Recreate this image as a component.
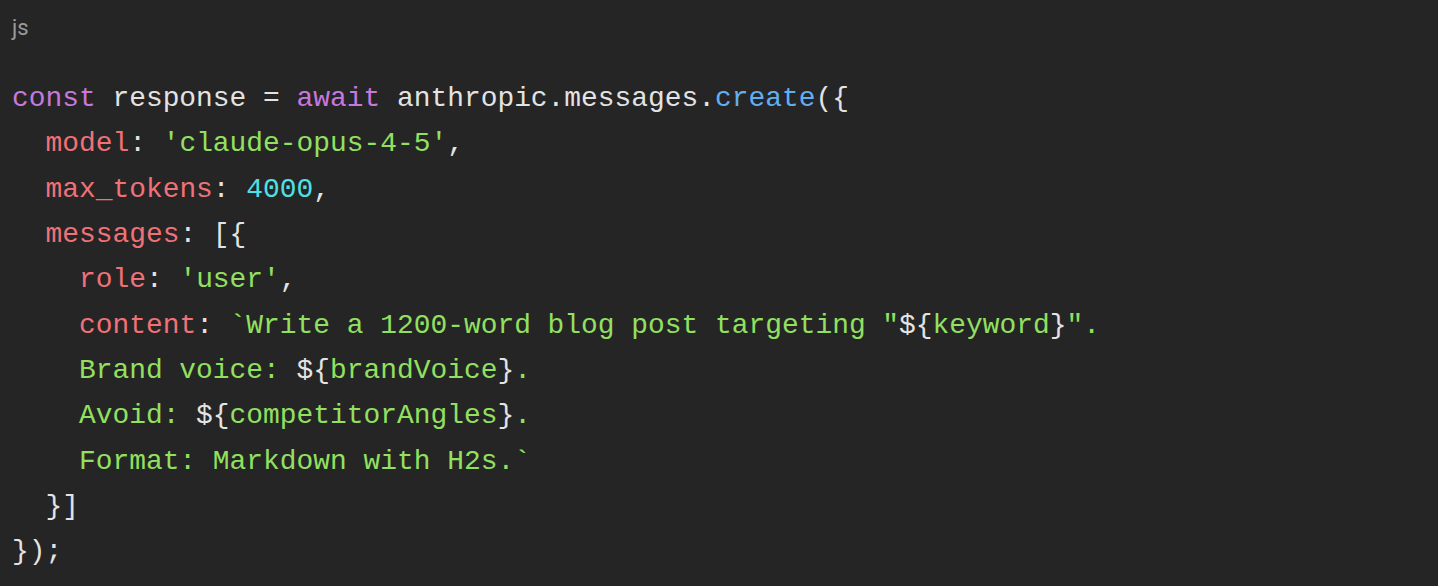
import React from "react";

const P = ({ children }: { children: React.ReactNode }) => <span className="text-[#c678dd]">{children}</span>;
const R = ({ children }: { children: React.ReactNode }) => <span className="text-[#f07178]">{children}</span>;
const G = ({ children }: { children: React.ReactNode }) => <span className="text-[#92e060]">{children}</span>;
const B = ({ children }: { children: React.ReactNode }) => <span className="text-[#61aff0]">{children}</span>;
const C = ({ children }: { children: React.ReactNode }) => <span className="text-[#4fe0e6]">{children}</span>;

export default function App() {
  return (
    <div className="w-[1438px] h-[586px] bg-[#252525] overflow-hidden pl-[12px] pt-[13px]">
      <div className="text-[22px] leading-[30px] text-[#9a9a9a]" style={{ fontFamily: "Roboto, 'Noto Sans', sans-serif" }}>
        js
      </div>
      <pre
        className="mt-[33px] text-[27.9px] leading-[45.35px] text-[#e3e3e3] whitespace-pre"
        style={{ fontFamily: "'Liberation Mono', 'DejaVu Sans Mono', monospace" }}
      >
        <div><P>const</P> response = <P>await</P> anthropic.messages.<B>create</B>{"({"}</div>
        <div>  <R>model</R>: <G>'claude-opus-4-5'</G>,</div>
        <div>  <R>max_tokens</R>: <C>4000</C>,</div>
        <div>  <R>messages</R>: [{"{"}</div>
        <div>    <R>role</R>: <G>'user'</G>,</div>
        <div>    <R>content</R>: <G>`Write a 1200-word blog post targeting "</G>${"{"}<G>keyword</G>{"}"}<G>".</G></div>
        <div><G>    Brand voice: </G>${"{"}<G>brandVoice</G>{"}"}<G>.</G></div>
        <div><G>    Avoid: </G>${"{"}<G>competitorAngles</G>{"}"}<G>.</G></div>
        <div><G>    Format: Markdown with H2s.`</G></div>
        <div>  {"}"}]</div>
        <div>{"}"});</div>
      </pre>
    </div>
  );
}
